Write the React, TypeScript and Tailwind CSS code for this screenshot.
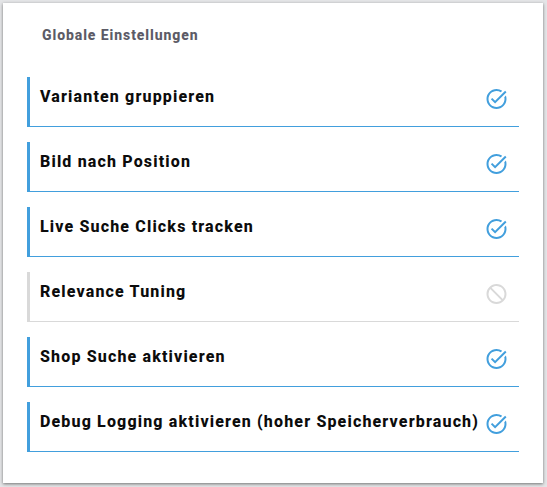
import React from "react";
import { MdBlock, MdTaskAlt } from "react-icons/md";

interface Setting {
  id: number;
  label: string;
  active: boolean;
}

const settings: Setting[] = [
  { id: 1, label: "Varianten gruppieren", active: true },
  { id: 2, label: "Bild nach Position", active: true },
  { id: 3, label: "Live Suche Clicks tracken", active: true },
  { id: 4, label: "Relevance Tuning", active: false },
  { id: 5, label: "Shop Suche aktivieren", active: true },
  { id: 6, label: "Debug Logging aktivieren (hoher Speicherverbrauch)", active: true },
];

const SettingRow: React.FC<{ setting: Setting }> = ({ setting }) => {
  return (
    <li
      className={`flex h-[50px] items-start justify-between border-b border-l-[3px] pl-2.5 pr-2.5 pt-2.5 ${
        setting.active ? "border-[#429fdd]" : "border-[#d9d9d9]"
      }`}
    >
      <span className="whitespace-nowrap text-base leading-5 font-extrabold tracking-[1.15px] text-[#0c0c0c]">
        {setting.label}
      </span>
      {setting.active ? (
        <MdTaskAlt className="size-6 shrink-0 -translate-x-[0.5px] text-[#429fdd]" />
      ) : (
        <MdBlock className="size-6 shrink-0 -translate-x-[0.5px] -scale-x-100 text-[#d9d9d9]" />
      )}
    </li>
  );
};

const App: React.FC = () => {
  return (
    <div className="h-[487px] w-[547px] overflow-hidden bg-[#e4e5e7] p-[3px] font-['Roboto',sans-serif]">
      <section className="h-[480px] w-[540px] bg-white px-6 pt-[22px] shadow-[0_1px_3px_rgba(0,0,0,0.5)]">
        <h2 className="pl-[15px] text-sm leading-5 font-extrabold tracking-[0.92px] text-[#5c5b66]">
          Globale Einstellungen
        </h2>

        <ul className="mt-8 flex flex-col gap-[15px]">
          {settings.map((setting) => (
            <SettingRow key={setting.id} setting={setting} />
          ))}
        </ul>
      </section>
    </div>
  );
};

export default App;
